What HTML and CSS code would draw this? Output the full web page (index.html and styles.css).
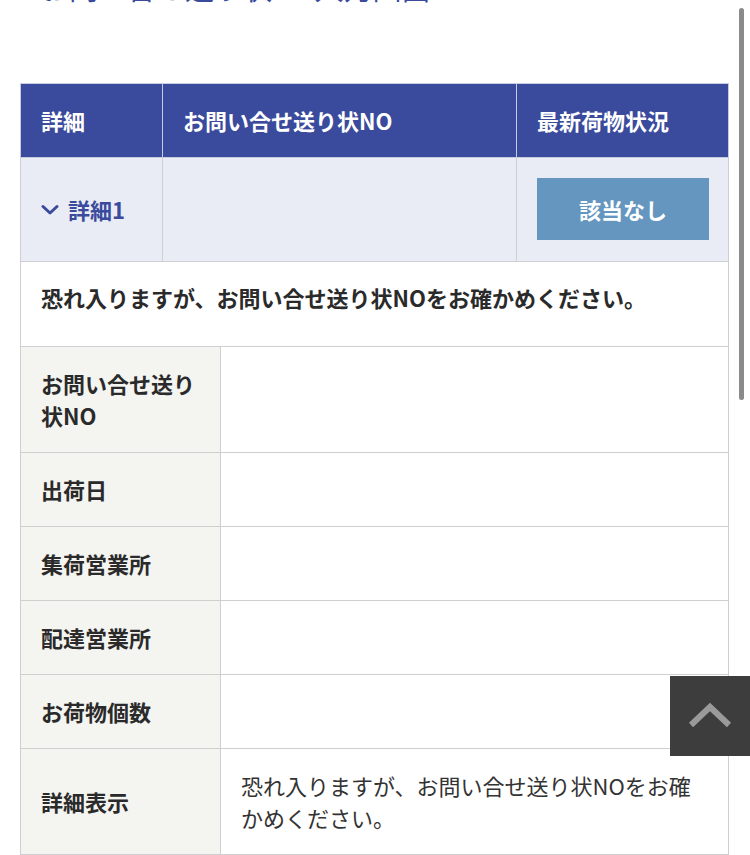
FILE: index.html
```html
<!DOCTYPE html>
<html lang="ja">
<head>
<meta charset="utf-8">
<title>お問い合せ送り状NO入力画面</title>
<link rel="stylesheet" href="styles.css">
</head>
<body>
<div class="page">
  <h1 class="title">お問い合せ送り状NO入力画面</h1>

  <table class="summary">
    <colgroup>
      <col class="c-detail">
      <col class="c-no">
      <col class="c-status">
    </colgroup>
    <thead>
      <tr>
        <th>詳細</th>
        <th>お問い合せ送り状NO</th>
        <th>最新荷物状況</th>
      </tr>
    </thead>
    <tbody>
      <tr class="item-row">
        <td>
          <a class="toggle" href="#">
            <svg class="chev" width="18" height="12" viewBox="0 0 18 12" aria-hidden="true">
              <path d="M2 2.5 L9 9 L16 2.5" fill="none" stroke="#3a4a9c" stroke-width="3" stroke-linecap="round" stroke-linejoin="round"/>
            </svg>
            <span>詳細1</span>
          </a>
        </td>
        <td></td>
        <td><span class="status-btn">該当なし</span></td>
      </tr>
      <tr class="msg-row">
        <td colspan="3">恐れ入りますが、お問い合せ送り状NOをお確かめください。</td>
      </tr>
    </tbody>
  </table>

  <table class="details">
    <colgroup>
      <col class="c-label">
      <col class="c-value">
    </colgroup>
    <tbody>
      <tr><th>お問い合せ送り状NO</th><td></td></tr>
      <tr><th>出荷日</th><td></td></tr>
      <tr><th>集荷営業所</th><td></td></tr>
      <tr><th>配達営業所</th><td></td></tr>
      <tr><th>お荷物個数</th><td></td></tr>
      <tr><th>詳細表示</th><td class="note">恐れ入りますが、お問い合せ送り状NOをお確かめください。</td></tr>
    </tbody>
  </table>
</div>

<div class="scrollbar" aria-hidden="true"></div>

<a class="to-top" href="#" aria-label="ページトップへ">
  <svg width="80" height="80" viewBox="0 0 80 80" aria-hidden="true">
    <path d="M21 49 L40 31 L59 49" fill="none" stroke="#9a9a9a" stroke-width="6" stroke-linecap="butt" stroke-linejoin="miter"/>
  </svg>
</a>
</body>
</html>
```

FILE: styles.css
```css
html {
  overflow: hidden;
}

body {
  margin: 0;
  background: #ffffff;
  font-family: "Noto Sans CJK JP", "Noto Sans", sans-serif;
  color: #2a2a2a;
}

.page {
  padding: 0 21px 0 20px;
}

.title {
  margin: -33px 0 0 20px;
  font-size: 29px;
  line-height: 40px;
  font-weight: 400;
  color: #3a4a9c;
  height: 40px;
  white-space: nowrap;
}

table {
  width: 100%;
  border-collapse: collapse;
  table-layout: fixed;
}

.summary {
  margin-top: 76px;
}

.c-detail { width: 142px; }
.c-status { width: 212px; }

.summary th {
  background: #3a4a9c;
  color: #ffffff;
  font-size: 22px;
  font-weight: 700;
  text-align: left;
  line-height: 33px;
  padding: 20px 20px;
  border: 1px solid #c7cbdd;
  border-top-color: #c9cee4;
}

.summary th + th {
  border-left-color: #5d69ab;
}

.summary td {
  border: 1px solid #cfcfd3;
}

.item-row td {
  background: #e9ecf5;
  padding: 20px 19px 21px 20px;
  height: 62px;
}

.toggle {
  display: flex;
  align-items: center;
  gap: 9px;
  color: #3a4a9c;
  text-decoration: none;
  font-size: 22px;
  font-weight: 700;
  line-height: 33px;
}

.chev {
  display: block;
  margin-top: 2px;
}

.status-btn {
  display: flex;
  align-items: center;
  justify-content: center;
  height: 62px;
  background: #6596bf;
  color: #ffffff;
  font-size: 22px;
  font-weight: 700;
}

.msg-row td {
  background: #ffffff;
  font-size: 22px;
  font-weight: 700;
  line-height: 33px;
  padding: 19px 20px 32px;
  color: #2a2a2a;
}

.c-label { width: 200px; }

.details th,
.details td {
  border: 1px solid #cfcfcf;
  border-top: none;
  font-size: 22px;
  line-height: 32px;
  padding: 20px 20px 21px;
  vertical-align: middle;
}

.details tr + tr th,
.details tr + tr td {
  border-top: 1px solid #cfcfcf;
}

.details th {
  background: #f4f4f1;
  font-weight: 700;
  text-align: left;
  color: #2a2a2a;
}

.details td {
  background: #ffffff;
}

.details td.note {
  font-weight: 400;
  color: #333333;
  height: 64px;
}

.scrollbar {
  position: fixed;
  top: 8px;
  right: 6px;
  width: 5px;
  height: 392px;
  border-radius: 3px;
  background: #8a8a8a;
}

.to-top {
  position: fixed;
  top: 676px;
  right: 0;
  width: 80px;
  height: 80px;
  background: #3d3d3d;
  display: block;
}

.to-top svg {
  display: block;
}
```
